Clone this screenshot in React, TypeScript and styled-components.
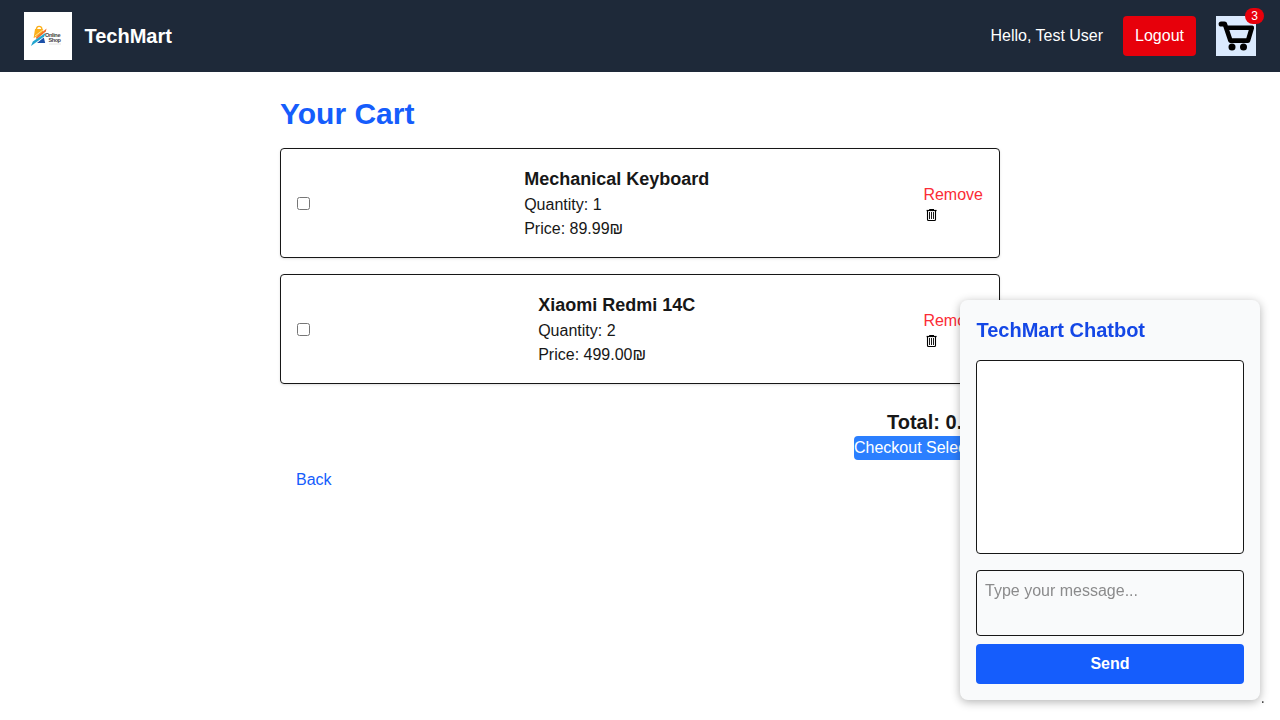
import React from "react";
import styled, { createGlobalStyle } from "styled-components";

const GlobalStyle = createGlobalStyle`
  *, *::before, *::after { box-sizing: border-box; margin: 0; padding: 0; }
  body {
    background: #ffffff;
    color: #171717;
    font-family: "Liberation Sans", Arial, Helvetica, sans-serif;
    font-size: 16px;
    line-height: 24px;
  }
  button { font: inherit; border: 0; cursor: pointer; }
`;

const Header = styled.header`
  display: flex;
  align-items: center;
  justify-content: space-between;
  height: 72px;
  padding: 12px 24px;
  background: #1e2939;
  color: #ffffff;
`;

const Brand = styled.div`
  display: flex;
  align-items: center;
  gap: 12.5px;
  font-size: 20px;
  line-height: 28px;
  font-weight: 700;
`;

const LogoSvg = styled.svg`
  display: block;
  width: 48px;
  height: 48px;
  background: #ffffff;
`;

const UserArea = styled.div`
  display: flex;
  align-items: center;
  gap: 20px;
`;

const LogoutButton = styled.button`
  padding: 8px 12px;
  border-radius: 4px;
  background: #e7000b;
  color: #ffffff;
`;

const CartLink = styled.a`
  position: relative;
  display: block;
  width: 40px;
  height: 40px;
  background: #dbeafe;
`;

const Badge = styled.span`
  position: absolute;
  top: -8px;
  right: -8px;
  padding: 0 6px;
  border-radius: 999px;
  background: #e7000b;
  color: #ffffff;
  font-size: 12px;
  line-height: 16px;
`;

const Main = styled.main`
  width: 720px;
  margin: 0 auto;
  padding-top: 24px;
`;

const PageTitle = styled.h1`
  margin-bottom: 16px;
  color: #155dfc;
  font-size: 30px;
  line-height: 36px;
  font-weight: 700;
`;

const ItemList = styled.ul`
  display: flex;
  flex-direction: column;
  gap: 16px;
  list-style: none;
`;

const ItemCard = styled.li`
  display: flex;
  align-items: center;
  justify-content: space-between;
  padding: 16px;
  border: 1px solid #171717;
  border-radius: 4px;
  box-shadow: 0 1px 3px rgba(0, 0, 0, 0.1), 0 1px 2px -1px rgba(0, 0, 0, 0.1);
`;

const Checkbox = styled.input`
  width: 13px;
  height: 13px;
`;

const ItemName = styled.h2`
  font-size: 18px;
  line-height: 28px;
  font-weight: 700;
`;

const RemoveButton = styled.button`
  background: transparent;
  color: #fb2c36;
  text-align: left;

  svg { display: block; margin-left: 0.4px; }
`;

const Summary = styled.section`
  display: flex;
  flex-direction: column;
  align-items: flex-end;
  margin-top: 24px;
`;

const Total = styled.p`
  width: 113px;
  font-size: 20px;
  line-height: 28px;
  font-weight: 700;
  white-space: nowrap;
`;

const CheckoutButton = styled.button`
  width: 146px;
  border-radius: 4px;
  background: #2b7fff;
  color: #ffffff;
  text-align: left;
`;

const BackLink = styled.a`
  display: inline-block;
  padding: 8px 16px;
  color: #155dfc;
`;

const ChatPanel = styled.aside`
  position: fixed;
  right: 20px;
  bottom: 20px;
  display: flex;
  flex-direction: column;
  width: 300px;
  height: 400px;
  padding: 16px;
  border-radius: 8px;
  background: #f9fafb;
  box-shadow: 0 2px 10px rgba(0, 0, 0, 0.3);
`;

const ChatTitle = styled.h2`
  margin-bottom: 16px;
  padding-left: 0.5px;
  color: #1447e6;
  font-size: 20px;
  line-height: 28px;
  font-weight: 700;
`;

const Messages = styled.div`
  flex: 1;
  margin-bottom: 16px;
  border: 1px solid #171717;
  border-radius: 4px;
  background: #ffffff;
`;

const MessageInput = styled.textarea`
  display: block;
  width: 100%;
  height: 66px;
  margin-bottom: 8px;
  padding: 8px;
  border: 1px solid #171717;
  border-radius: 4px;
  background: transparent;
  color: inherit;
  font: inherit;
  resize: none;
  outline: none;

  &::placeholder { color: #8b8b8c; }
`;

const SendButton = styled.button`
  padding: 8px 16px;
  border-radius: 4px;
  background: #155dfc;
  color: #ffffff;
  font-weight: 700;
`;

const CornerDot = styled.span`
  position: fixed;
  right: 15px;
  bottom: 10px;
  color: #4a4a4a;
`;

const Logo = () => (
  <LogoSvg viewBox="0 0 48 48">
    <path d="M9.6 26 L11 17 H19.2 L19 22 Z" fill="#fbb01c" />
    <path d="M12.4 18 C12 13.2 18 13.2 17.9 17.5" fill="none" stroke="#fbb01c" strokeWidth="1.4" />
    <path d="M12 25.5 L22.6 16.4 L21.8 19.6 L12.6 27.2 Z" fill="#f26b2c" />
    <path d="M11 24 L20.5 16.8" stroke="#ffffff" strokeWidth="0.6" />
    <path d="M7 34 L8.8 29.4 L21.8 20.8 L20.2 24.4 Z" fill="#22a5cf" />
    <path d="M13 31 L19.8 25.6 L21.2 31 Z" fill="#1b50a8" />
    <text x="21" y="25.2" fontSize="5.6" fontWeight="700" fill="#444444" textLength="15.5">Online</text>
    <text x="24.5" y="30.2" fontSize="5.6" fontWeight="700" fill="#444444" textLength="12.5">Shop</text>
    <path d="M25 32 H37" stroke="#dddddd" strokeWidth="0.8" />
  </LogoSvg>
);

const CartIcon = () => (
  <svg width="40" height="40" viewBox="0 0 40 40" fill="none" stroke="#000000" strokeLinejoin="round" strokeLinecap="round">
    <path d="M5.2 8 H8.4" strokeWidth="5.2" />
    <path d="M9 8.5 L14.4 24.6 H32 L35.8 11.8 H10.5" strokeWidth="4.6" />
    <circle cx="16" cy="31" r="3.5" fill="#000000" stroke="none" />
    <circle cx="27.5" cy="31" r="3.5" fill="#000000" stroke="none" />
  </svg>
);

const TrashIcon = () => (
  <svg width="16" height="16" viewBox="0 0 16 16" fill="none" stroke="#000000">
    <path d="M2.6 3.5 H12.6" strokeWidth="1.2" />
    <path d="M5.2 2.5 H10" strokeWidth="1" />
    <path d="M3.5 4 V12.5 Q3.5 13.5 4.5 13.5 H10.5 Q11.5 13.5 11.5 12.5 V4" strokeWidth="1.1" />
    <path d="M5.5 5 V12 M7.5 5 V12 M9.5 5 V12" strokeWidth="0.9" />
  </svg>
);

const items = [
  { name: "Mechanical Keyboard", quantity: 1, price: "89.99" },
  { name: "Xiaomi Redmi 14C", quantity: 2, price: "499.00" },
];

export default function App() {
  return (
    <>
      <GlobalStyle />
      <Header>
        <Brand>
          <Logo />
          <span>TechMart</span>
        </Brand>
        <UserArea>
          <span>Hello, Test User</span>
          <LogoutButton>Logout</LogoutButton>
          <CartLink>
            <CartIcon />
            <Badge>3</Badge>
          </CartLink>
        </UserArea>
      </Header>
      <Main>
        <PageTitle>Your Cart</PageTitle>
        <ItemList>
          {items.map((item) => (
            <ItemCard key={item.name}>
              <Checkbox type="checkbox" />
              <div>
                <ItemName>{item.name}</ItemName>
                <p>Quantity: {item.quantity}</p>
                <p>Price: {item.price}₪</p>
              </div>
              <RemoveButton>
                Remove
                <TrashIcon />
              </RemoveButton>
            </ItemCard>
          ))}
        </ItemList>
        <Summary>
          <Total>Total: 0.00₪</Total>
          <CheckoutButton>Checkout Selected</CheckoutButton>
        </Summary>
        <BackLink>Back</BackLink>
      </Main>
      <ChatPanel>
        <ChatTitle>TechMart Chatbot</ChatTitle>
        <Messages />
        <MessageInput placeholder="Type your message..." />
        <SendButton>Send</SendButton>
      </ChatPanel>
      <CornerDot>.</CornerDot>
    </>
  );
}
